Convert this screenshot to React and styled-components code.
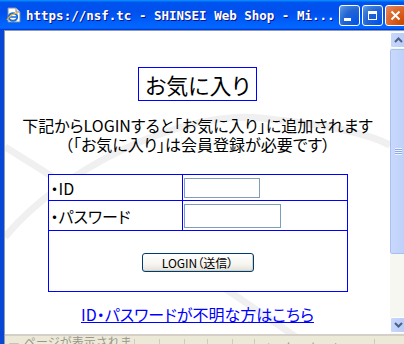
import React from 'react';
import styled, { createGlobalStyle } from 'styled-components';

// ********************** STYLED COMPONENTS ********************************

const GlobalStyle = createGlobalStyle`
  html, body {
    margin: 0;
    padding: 0;
    width: 404px;
    height: 344px;
    overflow: hidden;
    background: #ffffff;
  }
`;

const jp = `"Noto Sans CJK JP", "Liberation Sans", sans-serif`;

const Window = styled.div`
  width: 411px;
  height: 360px;
  display: flex;
  flex-direction: column;
  background: #0a4fdd;
`;

const TitleBar = styled.div`
  height: 30px;
  flex: none;
  display: flex;
  align-items: center;
  gap: 4px;
  padding: 0 5px 0 6px;
  background: linear-gradient(180deg, #0997ff, #0053ee 8%, #0050ee 40%, #0066ff 88%, #0066ff 93%, #005bff 95%, #003dd7 96%, #003dd7);
`;

const Title = styled.span`
  color: #fff;
  font-family: "DejaVu Sans Mono", "Liberation Mono", monospace;
  font-weight: bold;
  font-size: 12.5px;
  white-space: pre;
  text-shadow: 1px 1px #0f1089;
`;

const Controls = styled.div`
  margin-left: auto;
  display: flex;
  gap: 2px;
`;

const WinButton = styled.div`
  width: 21px;
  height: 21px;
  box-sizing: border-box;
  border: 1px solid #fff;
  border-radius: 3px;
  position: relative;
  background: ${p => p.close
    ? 'radial-gradient(circle at 90% 90%, #cc4600 0%, #dc6527 55%, #e08c67 100%)'
    : 'radial-gradient(circle at 90% 90%, #0054e9 0%, #2263d5 55%, #4282d6 80%, #6fa1f4 100%)'};
  display: flex;
  align-items: center;
  justify-content: center;
`;

const MinGlyph = styled.div`
  width: 7px;
  height: 3px;
  background: #fff;
  position: absolute;
  left: 4px;
  bottom: 4px;
`;

const MaxGlyph = styled.div`
  width: 9px;
  height: 9px;
  box-sizing: border-box;
  border: 1px solid #fff;
  border-top-width: 3px;
`;

const Frame = styled.div`
  flex: 1;
  display: flex;
  padding: 0 4px 4px 4px;
  background: linear-gradient(90deg, #0846d4, #166aee 40%, #0a55e3);
`;

const Client = styled.div`
  flex: 1;
  display: flex;
  flex-direction: column;
  border-top: 1px solid #8e9bb4;
  border-left: 1px solid #8e9bb4;
  background: #ece9d8;
`;

const Main = styled.div`
  height: 303px;
  display: flex;
  flex: none;
  border-bottom: 2px solid #d4d0c8;
`;

const Content = styled.div`
  flex: 1;
  position: relative;
  overflow: hidden;
  background: #fff;
  display: flex;
  flex-direction: column;
  align-items: center;
  font-family: ${jp};
  font-feature-settings: "palt";
  color: #000;
`;

const Watermark = styled.svg`
  position: absolute;
  left: 0;
  top: 0;
  pointer-events: none;
`;

const Heading = styled.h1`
  position: relative;
  margin: 36px 0 0;
  padding: 0 6px;
  border: 1px solid #0000ff;
  font-size: 22px;
  font-weight: normal;
  line-height: 32px;
`;

const Intro = styled.p`
  position: relative;
  margin: 15px 0 0;
  font-size: 16px;
  line-height: 19px;
  text-align: center;
`;

const Table = styled.table`
  position: relative;
  margin-top: 20px;
  width: 300px;
  border-collapse: collapse;
  background: #fff;
`;

const Cell = styled.td`
  border: 1px solid #0000ff;
  padding: 0 0 0 ${p => p.pad || 0}px;
  height: ${p => p.h}px;
  width: ${p => (p.w ? `${p.w}px` : 'auto')};
  font-size: 16px;
  text-align: ${p => (p.center ? 'center' : 'left')};
  vertical-align: middle;
`;

const Input = styled.input`
  display: block;
  box-sizing: border-box;
  width: ${p => p.w}px;
  height: ${p => p.h}px;
  border: 1px solid #7f9db9;
  padding: 0;
  margin: 0;
  background: #fff;
`;

const SubmitButton = styled.button`
  width: 112px;
  height: 19px;
  padding: 0;
  border: 1px solid #003c74;
  border-radius: 3px;
  background: linear-gradient(180deg, #ffffff 0%, #f6f5f0 60%, #e3e1d6 100%);
  box-shadow: inset -1px -1px 0 #d6d0c5;
  font-family: ${jp};
  font-feature-settings: "palt";
  font-size: 12px;
  line-height: 15px;
  color: #000;
`;

const HelpLink = styled.a`
  position: relative;
  margin-top: 13px;
  font-size: 16px;
  line-height: 19px;
  color: #0000ff;
  text-decoration: underline;
`;

const ScrollBar = styled.div`
  width: 17px;
  flex: none;
  display: flex;
  flex-direction: column;
  padding: 1px 0 1px;
  box-sizing: border-box;
  background: #f7f7f2;
`;

const ArrowButton = styled.div`
  height: 16px;
  flex: none;
  box-sizing: border-box;
  border: 1px solid #fff;
  border-radius: 2px;
  background: linear-gradient(90deg, #c8d7fb, #b8cbf8);
  display: flex;
  align-items: center;
  justify-content: center;
`;

const Thumb = styled.div`
  margin-top: 1px;
  height: 205px;
  flex: none;
  box-sizing: border-box;
  border: 1px solid #fff;
  outline: 1px solid #a8bff3;
  outline-offset: -1px;
  border-radius: 2px;
  background: linear-gradient(90deg, #c9d8fc, #bdd0fa);
  display: flex;
  align-items: center;
  justify-content: center;
`;

const Grip = styled.div`
  width: 7px;
  height: 7px;
  background: repeating-linear-gradient(180deg, #eef3fe 0 1px, #8ca8e8 1px 2px);
`;

const Track = styled.div`
  flex: 1;
`;

const StatusBar = styled.div`
  flex: 1;
  display: flex;
  align-items: flex-start;
  padding-top: 3px;
  font-family: ${jp};
  font-size: 12px;
  color: #9a978a;
`;

const StatusCell = styled.div`
  width: ${p => p.w}px;
  flex: none;
  height: 18px;
  box-sizing: border-box;
  border-right: 1px solid #cfccbd;
  display: flex;
  align-items: center;
  gap: 5px;
  padding-left: 4px;
  line-height: 12px;
`;

// ********************** STYLED COMPONENTS END ********************************

const PageIcon = () => (
  <svg width="16" height="16" viewBox="0 0 16 16">
    <path d="M2 1h8l4 4v10H2z" fill="#fff" stroke="#7d8a9c" />
    <path d="M10 1v4h4" fill="#e5e5e5" stroke="#7d8a9c" />
    <ellipse cx="7" cy="10" rx="4.2" ry="3.8" fill="none" stroke="#1e6fd9" strokeWidth="2" />
    <path d="M3.5 10h7" stroke="#1e6fd9" strokeWidth="1.6" />
    <path d="M1 13c2-4 7-7 11-7" fill="none" stroke="#f2b01e" strokeWidth="1.2" />
  </svg>
);

const Chevron = ({ down }) => (
  <svg width="9" height="6" viewBox="0 0 9 6">
    <path d={down ? 'M1 1l3.5 3.5L8 1' : 'M1 5l3.5-3.5L8 5'} fill="none" stroke="#4d6185" strokeWidth="2" />
  </svg>
);

const StatusIcon = () => (
  <svg width="12" height="12" viewBox="0 0 12 12">
    <rect x="1" y="1" width="10" height="10" fill="#fff" stroke="#a6a6a6" />
  </svg>
);

export default function App() {
  return (
    <>
      <GlobalStyle />
      <Window>
        <TitleBar>
          <PageIcon />
          <Title>https://nsf.tc - SHINSEI Web Shop - Mi...</Title>
          <Controls>
            <WinButton><MinGlyph /></WinButton>
            <WinButton><MaxGlyph /></WinButton>
            <WinButton close>
              <svg width="11" height="11" viewBox="0 0 11 11">
                <path d="M1.5 1.5l8 8M9.5 1.5l-8 8" stroke="#fff" strokeWidth="2" />
              </svg>
            </WinButton>
          </Controls>
        </TitleBar>
        <Frame>
          <Client>
            <Main>
              <Content>
                <Watermark width="385" height="303" viewBox="0 0 385 303">
                  <path d="M0 206C55 139 175 79 255 87S365 104 385 114" fill="none" stroke="#f0f0f0" strokeWidth="7" />
                  <path d="M0 116C85 169 195 239 295 309" fill="none" stroke="#f0f0f0" strokeWidth="7" />
                </Watermark>
                <Heading>お気に入り</Heading>
                <Intro>
                  下記からLOGINすると「お気に入り」に追加されます<br />
                  （「お気に入り」は会員登録が必要です）
                </Intro>
                <Table>
                  <tbody>
                    <tr>
                      <Cell w={131} h={25} pad={2}>・ID</Cell>
                      <Cell h={25} pad={1}><Input w={76} h={20} /></Cell>
                    </tr>
                    <tr>
                      <Cell w={131} h={29} pad={2}>・パスワード</Cell>
                      <Cell h={29} pad={1}><Input w={97} h={24} type="password" /></Cell>
                    </tr>
                    <tr>
                      <Cell colSpan={2} h={60} center>
                        <SubmitButton>LOGIN（送信）</SubmitButton>
                      </Cell>
                    </tr>
                  </tbody>
                </Table>
                <HelpLink href="#">ID・パスワードが不明な方はこちら</HelpLink>
              </Content>
              <ScrollBar>
                <ArrowButton><Chevron /></ArrowButton>
                <Thumb><Grip /></Thumb>
                <Track />
                <ArrowButton><Chevron down /></ArrowButton>
              </ScrollBar>
            </Main>
            <StatusBar>
              <StatusCell w={130}><StatusIcon />ページが表示されました</StatusCell>
              <StatusCell w={25} />
              <StatusCell w={25} />
              <StatusCell w={23} />
              <StatusCell w={25} />
              <StatusCell w={22} />
              <StatusCell w={120}>インターネット</StatusCell>
            </StatusBar>
          </Client>
        </Frame>
      </Window>
    </>
  );
}
